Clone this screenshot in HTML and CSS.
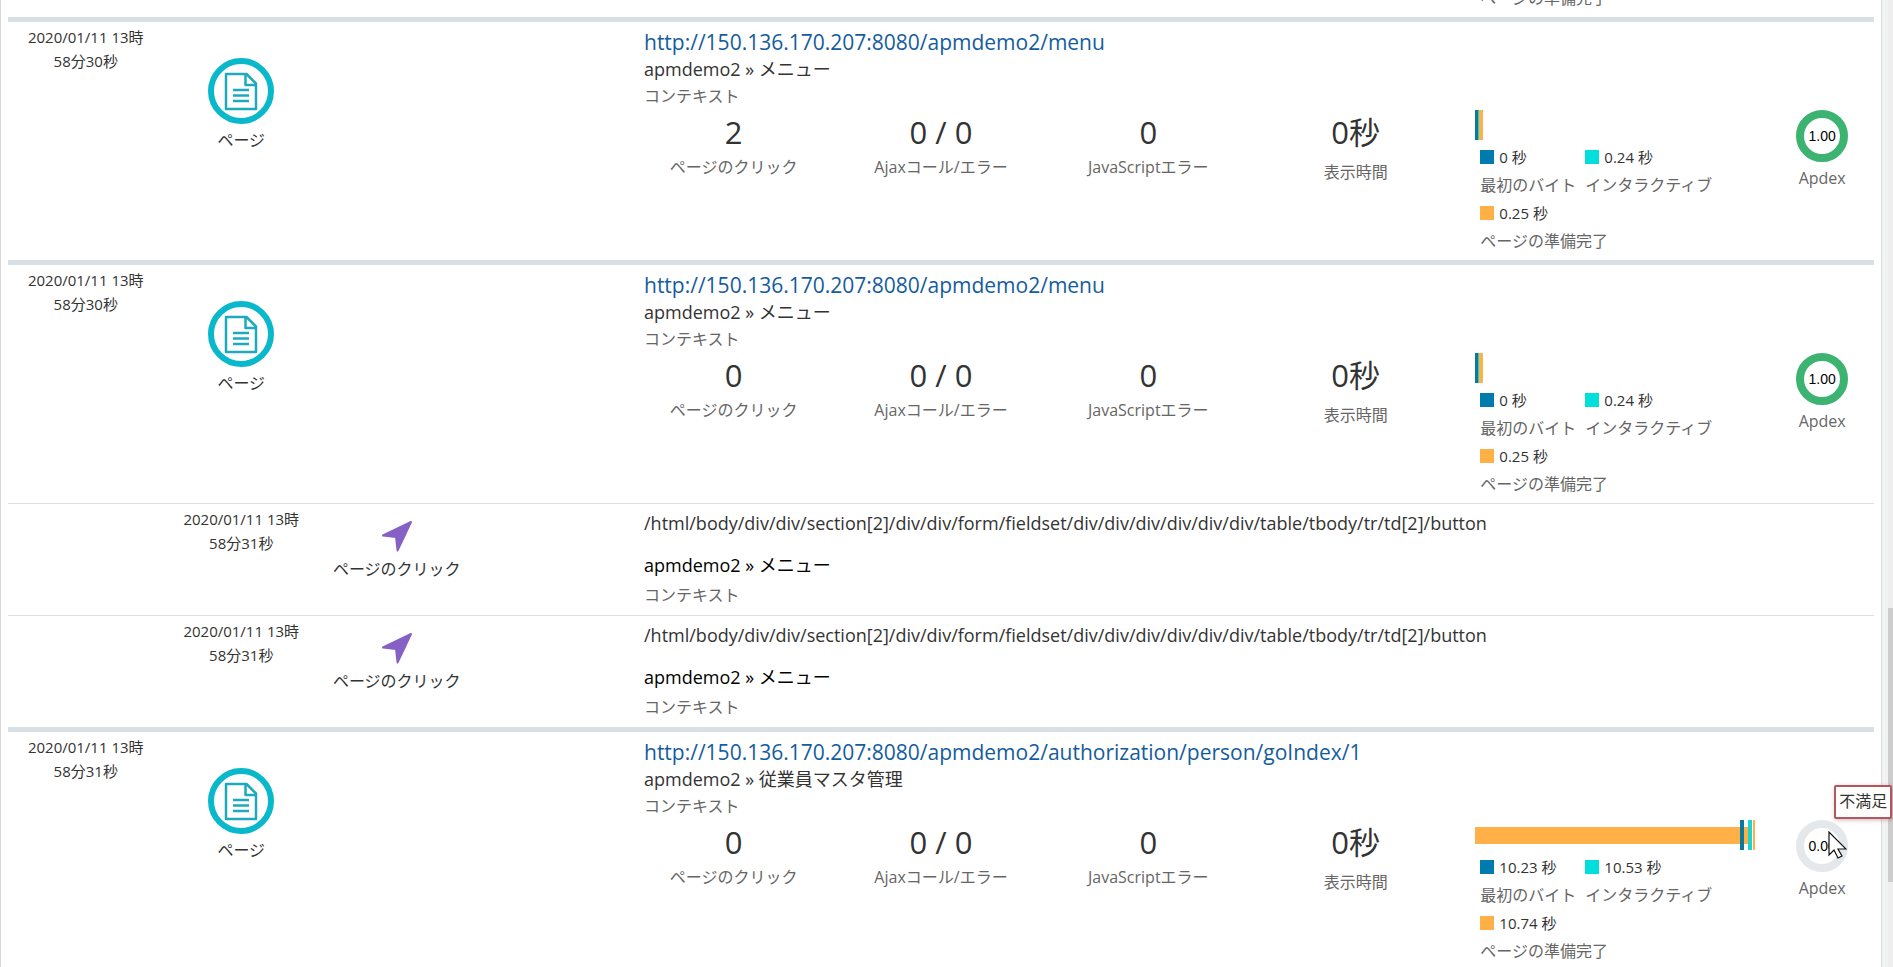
FILE: index.html
```
<!DOCTYPE html>
<html lang="ja">
<head>
    <meta charset="UTF-8">
    <title>セッション</title>
    <link rel="stylesheet" href="styles.css">
</head>
<body>
    <!-- Shared icons -->
    <svg class="defs" aria-hidden="true">
        <symbol id="icon-page" viewBox="0 0 66 66">
            <circle cx="33" cy="33" r="30" fill="none" stroke="#09b8cb" stroke-width="6"/>
            <path d="M18 16h20.500l9.500 9.500V51H18z M37.500 16v11H48" fill="none" stroke="#1eaabd" stroke-width="2.500" stroke-linejoin="round"/>
            <path d="M25 32h16M25 37.500h16M25 43h16" stroke="#1eaabd" stroke-width="2.300"/>
        </symbol>
        <symbol id="icon-click" viewBox="0 0 32 32">
            <path d="M30 2 16.500 30.500 15 17 2 15.500z" fill="#8661c5" stroke="#8661c5" stroke-width="2" stroke-linejoin="round"/>
        </symbol>
    </svg>

    <div class="viewport">
        <main class="timeline">
            <!-- Tail of the row scrolled off the top -->
            <section class="row row-tail">
                <div class="details">
                    <div class="metrics">
                        <span class="legend-label">ページの準備完了</span>
                    </div>
                </div>
            </section>

            <section class="row page-row">
                <div class="date">2020/01/11 13時<br>58分30秒</div>
                <div class="kind">
                    <svg class="icon-page" aria-hidden="true"><use href="#icon-page"/></svg>
                    <span>ページ</span>
                </div>
                <div class="details">
                    <a class="url" href="#">http://150.136.170.207:8080/apmdemo2/menu</a>
                    <div class="name">apmdemo2 » メニュー</div>
                    <div class="context">コンテキスト</div>
                    <div class="metrics">
                        <div class="metric"><strong>2</strong><span>ページのクリック</span></div>
                        <div class="metric"><strong>0 / 0</strong><span>Ajaxコール/エラー</span></div>
                        <div class="metric"><strong>0</strong><span>JavaScriptエラー</span></div>
                        <div class="metric time"><strong>0秒</strong><span>表示時間</span></div>
                        <div class="chart">
                            <div class="bar short"><i class="first"></i><i class="inter"></i><i class="ready"></i></div>
                            <div class="legend">
                                <div><span class="legend-value first">0 秒</span><span class="legend-label">最初のバイト</span></div>
                                <div><span class="legend-value inter">0.24 秒</span><span class="legend-label">インタラクティブ</span></div>
                                <div><span class="legend-value ready">0.25 秒</span><span class="legend-label">ページの準備完了</span></div>
                            </div>
                        </div>
                        <div class="apdex"><div class="ring">1.00</div><span>Apdex</span></div>
                    </div>
                </div>
            </section>

            <section class="row page-row">
                <div class="date">2020/01/11 13時<br>58分30秒</div>
                <div class="kind">
                    <svg class="icon-page" aria-hidden="true"><use href="#icon-page"/></svg>
                    <span>ページ</span>
                </div>
                <div class="details">
                    <a class="url" href="#">http://150.136.170.207:8080/apmdemo2/menu</a>
                    <div class="name">apmdemo2 » メニュー</div>
                    <div class="context">コンテキスト</div>
                    <div class="metrics">
                        <div class="metric"><strong>0</strong><span>ページのクリック</span></div>
                        <div class="metric"><strong>0 / 0</strong><span>Ajaxコール/エラー</span></div>
                        <div class="metric"><strong>0</strong><span>JavaScriptエラー</span></div>
                        <div class="metric time"><strong>0秒</strong><span>表示時間</span></div>
                        <div class="chart">
                            <div class="bar short"><i class="first"></i><i class="inter"></i><i class="ready"></i></div>
                            <div class="legend">
                                <div><span class="legend-value first">0 秒</span><span class="legend-label">最初のバイト</span></div>
                                <div><span class="legend-value inter">0.24 秒</span><span class="legend-label">インタラクティブ</span></div>
                                <div><span class="legend-value ready">0.25 秒</span><span class="legend-label">ページの準備完了</span></div>
                            </div>
                        </div>
                        <div class="apdex"><div class="ring">1.00</div><span>Apdex</span></div>
                    </div>
                </div>
            </section>

            <section class="row click-row">
                <div class="date">2020/01/11 13時<br>58分31秒</div>
                <div class="kind">
                    <svg class="icon-click" aria-hidden="true"><use href="#icon-click"/></svg>
                    <span>ページのクリック</span>
                </div>
                <div class="details">
                    <div class="xpath">/html/body/div/div/section[2]/div/div/form/fieldset/div/div/div/div/div/div/table/tbody/tr/td[2]/button</div>
                    <div class="name">apmdemo2 » メニュー</div>
                    <div class="context">コンテキスト</div>
                </div>
            </section>

            <section class="row click-row">
                <div class="date">2020/01/11 13時<br>58分31秒</div>
                <div class="kind">
                    <svg class="icon-click" aria-hidden="true"><use href="#icon-click"/></svg>
                    <span>ページのクリック</span>
                </div>
                <div class="details">
                    <div class="xpath">/html/body/div/div/section[2]/div/div/form/fieldset/div/div/div/div/div/div/table/tbody/tr/td[2]/button</div>
                    <div class="name">apmdemo2 » メニュー</div>
                    <div class="context">コンテキスト</div>
                </div>
            </section>

            <section class="row page-row">
                <div class="date">2020/01/11 13時<br>58分31秒</div>
                <div class="kind">
                    <svg class="icon-page" aria-hidden="true"><use href="#icon-page"/></svg>
                    <span>ページ</span>
                </div>
                <div class="details">
                    <a class="url" href="#">http://150.136.170.207:8080/apmdemo2/authorization/person/goIndex/1</a>
                    <div class="name">apmdemo2 » 従業員マスタ管理</div>
                    <div class="context">コンテキスト</div>
                    <div class="metrics">
                        <div class="metric"><strong>0</strong><span>ページのクリック</span></div>
                        <div class="metric"><strong>0 / 0</strong><span>Ajaxコール/エラー</span></div>
                        <div class="metric"><strong>0</strong><span>JavaScriptエラー</span></div>
                        <div class="metric time"><strong>0秒</strong><span>表示時間</span></div>
                        <div class="chart">
                            <div class="bar long"><b></b><i class="first"></i><b class="gap"></b><i class="inter"></i><i class="ready"></i></div>
                            <div class="legend">
                                <div><span class="legend-value first">10.23 秒</span><span class="legend-label">最初のバイト</span></div>
                                <div><span class="legend-value inter">10.53 秒</span><span class="legend-label">インタラクティブ</span></div>
                                <div><span class="legend-value ready">10.74 秒</span><span class="legend-label">ページの準備完了</span></div>
                            </div>
                        </div>
                        <div class="apdex">
                            <div class="ring empty">0.00
                                <svg class="cursor" viewBox="0 0 19 28" aria-hidden="true">
                                    <path d="M1 1v23l5-5 4 8 4-2-4-7h8z" fill="#fff" stroke="#111" stroke-width="1.200"/>
                                </svg>
                                <div class="tooltip" role="tooltip">不満足</div>
                            </div>
                            <span>Apdex</span>
                        </div>
                    </div>
                </div>
            </section>
        </main>
        <div class="scrollbar"><div class="thumb"></div></div>
    </div>
</body>
</html>
```
FILE: styles.css
```
* {
    box-sizing: border-box;
}
body {
    margin: 0;
    background: #f2f4f4;
    color: #333;
    font-family: "Open Sans", "Noto Sans CJK JP", sans-serif;
    font-size: 16px;
    line-height: 24px;
    overflow: hidden;
}
.defs {
    display: none;
}
.viewport {
    display: flex;
    gap: 6px;
    height: 100vh;
    overflow: hidden;
}

/* Timeline rows, on a 12 column grid */
.timeline {
    flex: 1;
    height: max-content;
    padding: 0 7px;
    background: #fff;
    border-left: 1px solid #d9dadc;
    border-right: 1px solid #d9dadc;
}
.row {
    display: grid;
    grid-template-columns: repeat(12, minmax(0, 1fr));
}
.page-row {
    border-top: 5px solid #d8dfe5;
    padding-bottom: 5px;
}
.click-row {
    border-top: 1px solid #dcdfe1;
    padding-bottom: 5px;
}
.date {
    padding-top: 3px;
    font-size: 15px;
    text-align: center;
}
.click-row .date {
    grid-column: 2;
}
.kind {
    display: flex;
    flex-direction: column;
    align-items: center;
    font-size: 16px;
    white-space: nowrap;
}
.page-row .kind {
    padding-top: 36px;
    gap: 4px;
}
.click-row .kind {
    padding-top: 16px;
    gap: 5px;
}
.icon-page {
    width: 66px;
    height: 66px;
}
.icon-click {
    width: 32px;
    height: 32px;
}
.details {
    grid-column: 5 / 13;
    padding-top: 6px;
}
.url,
.name,
.context,
.xpath {
    display: block;
    padding-left: 14px;
    line-height: 27px;
    white-space: nowrap;
}
.url {
    color: #145c9e;
    font-size: 21px;
    line-height: 28px;
    text-decoration: none;
}
.name,
.xpath {
    font-size: 18px;
}
.context {
    color: #666;
}
.click-row .name {
    padding-top: 14px;
    line-height: 29px;
    color: #000;
}
.click-row .context {
    line-height: 30px;
}

/* Metrics */
.metrics {
    display: grid;
    grid-template-columns: 2fr 2fr 2fr 2fr 3fr 1fr;
}
.metric {
    display: flex;
    flex-direction: column;
    align-items: center;
    gap: 2px;
    color: #666;
    line-height: 22px;
    white-space: nowrap;
}
.metric strong {
    color: #333;
    font-size: 31px;
    font-weight: 400;
    line-height: 44px;
}
.metric.time {
    gap: 7px;
}

/* Timing bar */
.chart {
    padding-left: 16px;
}
.bar {
    display: flex;
    align-items: center;
    width: 280px;
    height: 30px;
    margin-bottom: 3px;
}
.bar i {
    height: 30px;
}
.bar b {
    flex: 1;
    height: 17px;
    background: #ffb046;
}
.bar b.gap {
    flex: none;
    width: 4px;
}
.bar .first {
    width: 4px;
    background: #0b789e;
}
.bar .inter {
    width: 4px;
    background: #1bd6cc;
}
.bar .ready {
    width: 2px;
    margin-left: 1px;
    background: #ffb046;
}
.bar.short .first {
    width: 3px;
}
.bar.short .inter {
    width: 1px;
}
.bar.short .ready {
    width: 4px;
    margin-left: 0;
}
.legend {
    display: grid;
    grid-template-columns: 105px 1fr;
    padding-left: 5px;
    font-size: 15px;
    line-height: 28px;
    white-space: nowrap;
}
.legend-value {
    display: flex;
    align-items: center;
    gap: 5px;
}
.legend-value::before {
    content: '';
    width: 14px;
    height: 14px;
    background: #007bad;
}
.legend-value.inter::before {
    background: #00dfdc;
}
.legend-value.ready::before {
    background: #ffb046;
}
.legend-label {
    display: block;
    color: #666;
    font-size: 16px;
    line-height: 28px;
}

/* Apdex score */
.apdex {
    display: flex;
    flex-direction: column;
    align-items: center;
    gap: 4px;
    color: #666;
}
.ring {
    position: relative;
    display: flex;
    align-items: center;
    justify-content: center;
    width: 52px;
    height: 52px;
    border: 8px solid #3cb371;
    border-radius: 50%;
    color: #000;
    font: 14px "Liberation Sans", sans-serif;
}
.ring.empty {
    border-color: #e4e8eb;
}
.cursor {
    position: absolute;
    top: 3px;
    left: 24px;
    width: 19px;
    height: 28px;
}
.tooltip {
    position: absolute;
    right: -52px;
    bottom: 45px;
    padding: 3px 3px 7px;
    background: #fffdfb;
    border: 2px solid #b0585e;
    border-radius: 2px;
    box-shadow: 1px 1px 4px rgba(150, 70, 70, 0.4);
    color: #333;
    font: 16px/20px "Noto Sans CJK JP", sans-serif;
    white-space: nowrap;
}

/* Row cut by the top edge */
.row-tail {
    margin-top: -22px;
    padding-bottom: 5px;
}
.row-tail .legend-label {
    grid-column: 5;
    padding-left: 21px;
}

/* Scrollbar */
.scrollbar {
    width: 5px;
    padding-top: 608px;
    background: #eee;
}
.thumb {
    height: 274px;
    background: #cdcdcd;
}
```
